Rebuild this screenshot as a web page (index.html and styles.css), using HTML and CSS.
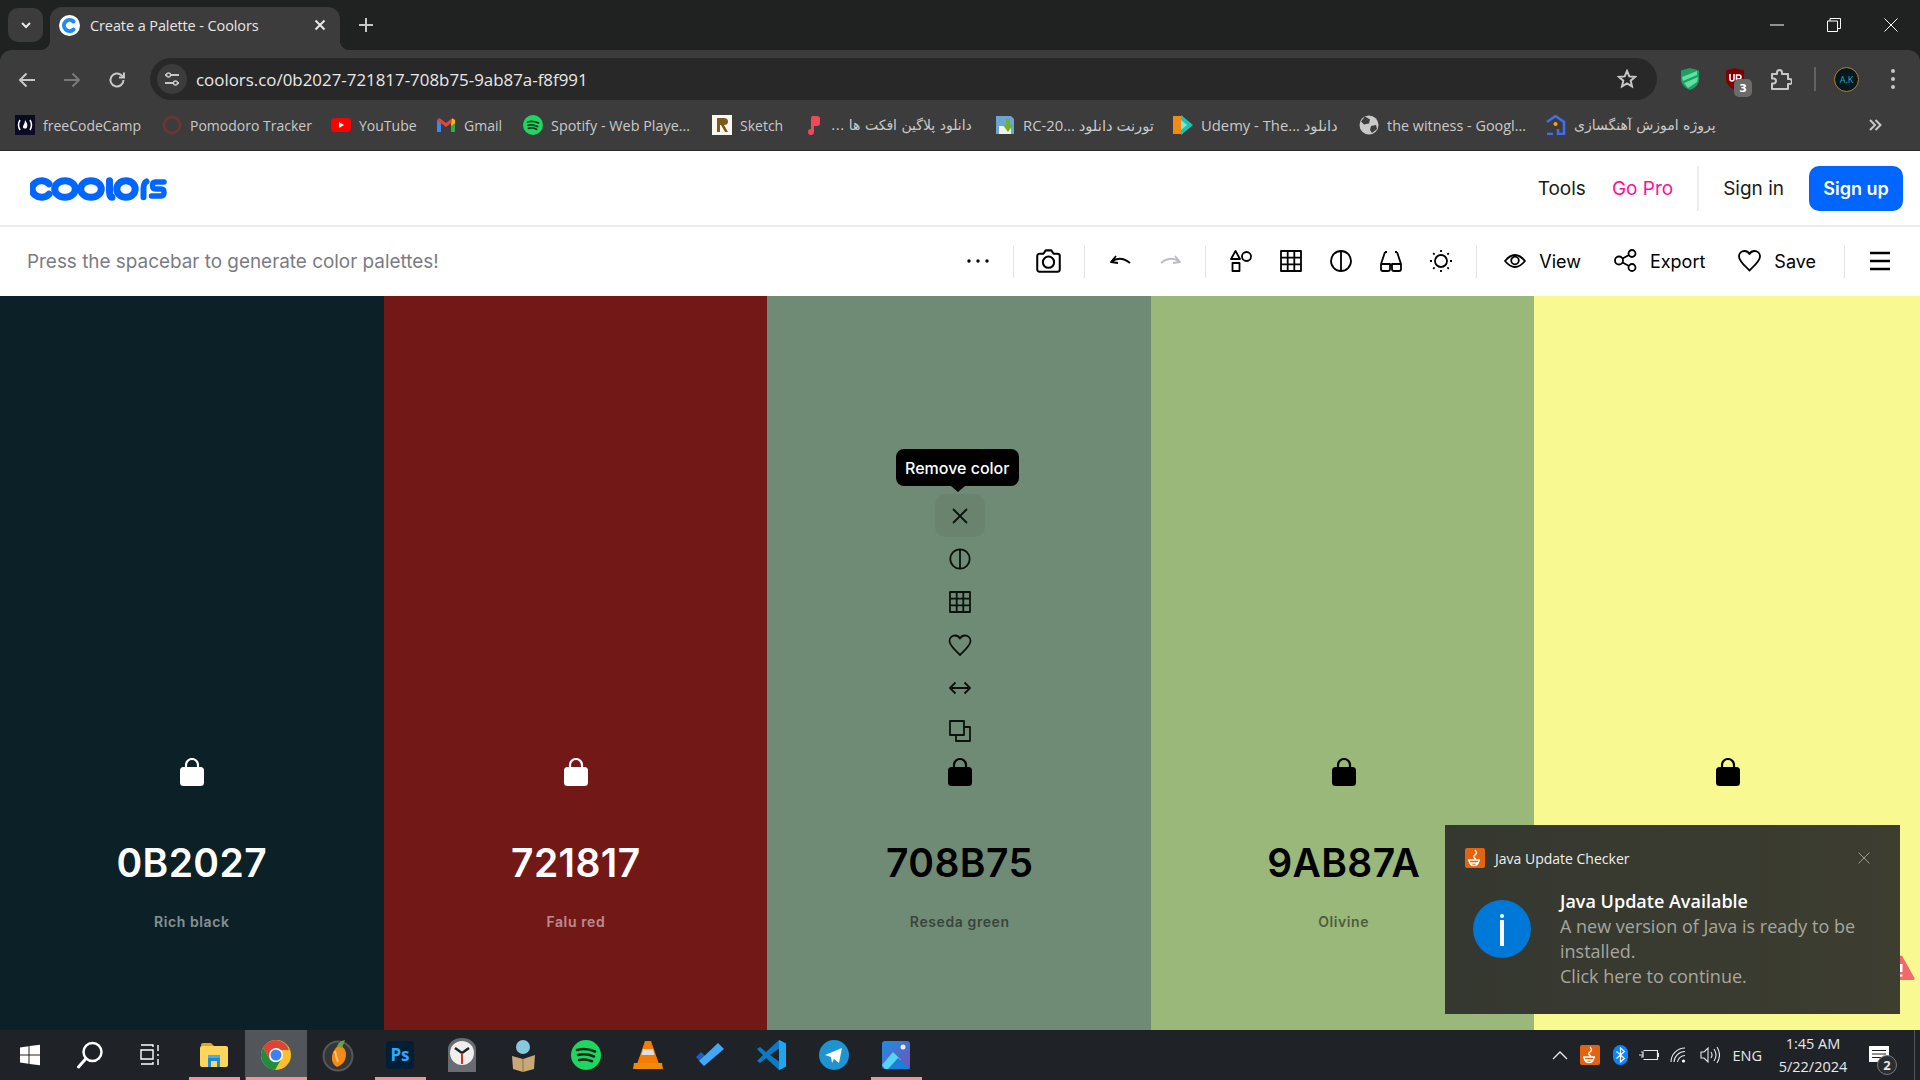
FILE: index.html
```html
<!DOCTYPE html>
<html lang="en">
<head>
<meta charset="utf-8">
<title>Create a Palette - Coolors</title>
<link rel="stylesheet" href="styles.css">
</head>
<body>
<header class="chrome">
  <div class="tabstrip">
    <button class="tabsearch"><svg width="14" height="14" viewBox="0 0 14 14"><path d="M3 5l4 4 4-4" class="st-w2"/></svg></button>
    <div class="tab">
      <svg class="favicon" width="21" height="21" viewBox="0 0 21 21"><circle cx="10.5" cy="10.5" r="10.5" fill="#fff"/><path d="M14.5 6.5a5.6 5.6 0 1 0 0 8" fill="none" stroke="#1a8df5" stroke-width="4" stroke-linecap="round"/></svg>
      <span class="tabtitle">Create a Palette - Coolors</span>
      <svg class="tabclose" width="12" height="12" viewBox="0 0 12 12"><path d="M1.5 1.5l9 9M10.5 1.5l-9 9" class="st-w2"/></svg>
    </div>
    <svg class="newtab" width="16" height="16" viewBox="0 0 16 16"><path d="M8 1v14M1 8h14" class="st-l2"/></svg>
    <div class="winctl">
      <svg width="14" height="14" viewBox="0 0 14 14"><path d="M0 7h14" class="st-w1"/></svg>
      <svg width="14" height="14" viewBox="0 0 14 14"><path d="M.5 3h10v10.500h-10zM3 3V.5h10.500v10H10.500" class="st-w1"/></svg>
      <svg width="14" height="14" viewBox="0 0 14 14"><path d="M.5.500l13 13M13.500.500l-13 13" class="st-w1"/></svg>
    </div>
  </div>
  <div class="navbar">
    <svg class="navicon" width="18" height="18" viewBox="0 0 18 18"><path d="M17 9H2M8.500 2.500L2 9l6.500 6.500" class="st-l2"/></svg>
    <svg class="navicon" width="18" height="18" viewBox="0 0 18 18"><path d="M1 9h15M9.500 2.500L16 9l-6.500 6.500" class="st-d2"/></svg>
    <svg class="navicon" width="18" height="18" viewBox="0 0 18 18"><path d="M15.500 9a6.500 6.500 0 1 1-2-4.700L16 6.500M16 1.500v5h-5" class="st-l2"/></svg>
    <div class="omnibox">
      <span class="tune"><svg width="16" height="16" viewBox="0 0 16 16"><path d="M1 4h1.500M7 4h8M1 12h8M13.500 12H15" class="st-l2"/><circle cx="4.500" cy="4" r="2" class="st-l15"/><circle cx="11.500" cy="12" r="2" class="st-l15"/></svg></span>
      <span class="url">coolors.co/0b2027-721817-708b75-9ab87a-f8f991</span>
      <svg class="star" width="20" height="20" viewBox="0 0 20 20"><path d="M10 2l2.300 5.400 5.700.5-4.300 3.800 1.300 5.700L10 14.400l-5 3 1.300-5.700L2 7.900l5.700-.5z" class="st-l2"/></svg>
    </div>
    <div class="exts">
      <svg class="ext-shield" width="20" height="24" viewBox="0 0 20 24"><path d="M10 1l9 2.500v9C19 18 14 21.500 10 23 6 21.500 1 18 1 12.500v-9z" fill="#1f9d66"/><path d="M2 10l15-6v4L3 14zM4 16l14-6-1 5-9 6z" fill="#5fe0a0"/></svg>
      <span class="ublock"><svg width="20" height="24" viewBox="0 0 20 24"><path d="M10 1l9 2.500v9C19 18 14 21.500 10 23 6 21.500 1 18 1 12.500v-9z" fill="#800000"/><path d="M5 7v5a2 2 0 0 0 4 0V7M11.500 13V8h2.500a2 2 0 0 1 0 4h-2" fill="none" stroke="#fff" stroke-width="1.600"/></svg><span class="ubadge">3</span></span>
      <svg class="ext-puzzle" width="22" height="22" viewBox="0 0 22 22"><path d="M2 6h5V4.500a2.500 2.500 0 0 1 5 0V6h6v5h1.500a2.500 2.500 0 0 1 0 5H18v5H2v-5.500h1.500a2.500 2.500 0 0 0 0-5H2z" fill="none" stroke="#c7c7c7" stroke-width="2" stroke-linejoin="round"/></svg>
      <i class="extdiv"></i>
      <span class="avatar">A.K</span>
      <svg class="ext-more" width="6" height="22" viewBox="0 0 6 22"><circle cx="3" cy="3" r="2" fill="#c7c7c7"/><circle cx="3" cy="11" r="2" fill="#c7c7c7"/><circle cx="3" cy="19" r="2" fill="#c7c7c7"/></svg>
    </div>
  </div>
  <nav class="bookmarks">
    <a class="bm b1"><svg width="20" height="20" viewBox="0 0 20 20"><rect width="20" height="20" fill="#0a0a23"/><path d="M5 5Q2 10 5 15M15 5q3 5 0 10" class="st-w15"/><path d="M10 5c2 3 3 5 2 7 0 2-4 2-4 0 0-2 2-3 2-7z" fill="#fff"/></svg><span>freeCodeCamp</span></a>
    <a class="bm b2"><svg width="20" height="20" viewBox="0 0 20 20"><circle cx="10" cy="10" r="8" fill="none" stroke="#673636" stroke-width="3"/></svg><span>Pomodoro Tracker</span></a>
    <a class="bm b3"><svg width="20" height="20" viewBox="0 0 20 20"><rect y="3" width="20" height="14" rx="4" fill="#f00"/><path d="M8 7l5 3-5 3z" fill="#fff"/></svg><span>YouTube</span></a>
    <a class="bm b4"><svg width="20" height="20" viewBox="0 0 20 20"><path d="M1 5v12h4V8z" fill="#4285f4"/><path d="M19 5v12h-4V8z" fill="#34a853"/><path d="M1 5l9 7 9-7-2.500-2L10 8 3.500 3z" fill="#ea4335"/><path d="M16 3.500L19 5v3l-4 3z" fill="#fbbc04"/></svg><span>Gmail</span></a>
    <a class="bm b5"><svg width="20" height="20" viewBox="0 0 20 20"><circle cx="10" cy="10" r="10" fill="#1ed760"/><path d="M4.500 7Q10 5.500 15.500 8M5 10.300q5-1.300 9.500 1.200M5.500 13.300q4-1 8 1" class="st-k2"/></svg><span>Spotify - Web Playe...</span></a>
    <a class="bm b6"><svg width="20" height="20" viewBox="0 0 20 20"><rect width="20" height="20" fill="#faf7ec"/><path d="M5 3h7q4 0 4 3.500T12 10l4 7h-3l-4-7H8v7H5z" fill="#7a5a22"/></svg><span>Sketch</span></a>
    <a class="bm b7"><svg width="14" height="20" viewBox="0 0 14 20"><path d="M5 1h5q3 0 3 3v4q0 3-3 3H7v6q0 3-3 3-3 0-3-3t3-3V3z" fill="#ef4958"/></svg><span>... دانلود پلاگین افکت ها</span></a>
    <a class="bm b8"><svg width="20" height="20" viewBox="0 0 20 20"><path d="M1 1h15l3 3v15H1z" fill="#6aa6cf"/><rect x="4" y="11" width="12" height="8" fill="#f2f2e6"/><path d="M11 4h4v6h3l-5 7-5-7h3z" fill="#6fb32a"/></svg><span>RC-20... تورنت دانلود</span></a>
    <a class="bm b9"><svg width="20" height="20" viewBox="0 0 20 20"><path d="M0 1h10v18H0z" fill="#f08a12"/><path d="M8 0l12 10L8 20z" fill="#16c5b4"/><path d="M8 5l6 5-6 5z" fill="#fff" opacity=".5"/></svg><span>Udemy - The... دانلود</span></a>
    <a class="bm b10"><svg width="20" height="20" viewBox="0 0 20 20"><circle cx="10" cy="10" r="9.500" fill="#c9c9c9"/><path d="M6 1.500l5 3-1 4-5 1-3-3zM12 11l5-1 1 4-5 4-2-3z" fill="#3c3c3c"/></svg><span>the witness - Googl...</span></a>
    <a class="bm b11"><svg width="21" height="20" viewBox="0 0 21 20"><path d="M2 7l8.500-6L19 7v12h-6v-5M8 19H2z" fill="none" stroke="#3f6ff0" stroke-width="2.500"/><circle cx="10.500" cy="9" r="2" fill="#f5a623"/></svg><span>پروژه اموزش آهنگسازی</span></a>
    <svg class="bm-more" width="14" height="14" viewBox="0 0 14 14"><path d="M2 2l5 5-5 5M7.500 2l5 5-5 5" class="st-l2"/></svg>
  </nav>
</header>

<main class="app">
  <div class="apphead">
    <svg class="logo" width="138" height="24" viewBox="0 0 138 24" role="img" aria-label="coolors">
      <g fill="none" stroke="#0066ff" stroke-width="7" stroke-linecap="round">
        <path d="M19 6.800A9.500 8.300 0 1 0 19 17.200"/>
        <ellipse cx="35" cy="12" rx="10.300" ry="8.300"/>
        <ellipse cx="61" cy="12" rx="10.300" ry="8.300"/>
        <path d="M79.500 3.700v10q0 6.500 2.500 6.500"/>
        <ellipse cx="96" cy="12" rx="9.200" ry="8.300"/>
        <path d="M113.500 20.300V12q0-6 3-7.500" stroke-width="6"/>
        <path d="M134 5h-8.500q-3 0-3 3.500t3 3.500h5.500q3 0 3 3.500t-3 3.500h-9.500" stroke-width="5.500"/>
      </g>
    </svg>
    <div class="mainnav">
      <a>Tools</a>
      <a class="gopro">Go Pro</a>
      <i class="navdiv"></i>
      <a>Sign in</a>
      <a class="signup">Sign up</a>
    </div>
  </div>
  <div class="apptools">
    <span class="hint">Press the spacebar to generate color palettes!</span>
    <div class="toolset">
      <button class="tb"><svg width="24" height="24" viewBox="0 0 24 24"><circle cx="3" cy="12" r="1.700" fill="#000"/><circle cx="12" cy="12" r="1.700" fill="#000"/><circle cx="21" cy="12" r="1.700" fill="#000"/></svg></button>
      <i class="tdiv"></i>
      <button class="tb"><svg width="27" height="27" viewBox="0 0 24 24"><path d="M4 6h3.500l2-3h5l2 3H20a2 2 0 0 1 2 2v12a2 2 0 0 1-2 2H4a2 2 0 0 1-2-2V8a2 2 0 0 1 2-2z" class="st-b"/><circle cx="12" cy="13.500" r="5" class="st-b"/></svg></button>
      <i class="tdiv"></i>
      <button class="tb"><svg width="24" height="24" viewBox="0 0 24 24"><path d="M3 13q9-7 19 1M8 7l-5 6 7 1" class="st-b"/></svg></button>
      <button class="tb"><svg width="24" height="24" viewBox="0 0 24 24"><path d="M22 13q-9-7-19 1M17 7l5 6-7 1" class="st-g"/></svg></button>
      <i class="tdiv"></i>
      <button class="tb"><svg width="24" height="24" viewBox="0 0 24 24"><path d="M6.500 2L11 10H2zM3.500 14h7v8h-7z" class="st-b"/><circle cx="17.500" cy="7.500" r="4.500" class="st-b"/></svg></button>
      <button class="tb"><svg width="24" height="24" viewBox="0 0 24 24"><path d="M2 2h20v20H2zM8.700 2v20M15.300 2v20M2 8.700h20M2 15.300h20" class="st-b"/></svg></button>
      <button class="tb"><svg width="24" height="24" viewBox="0 0 24 24"><circle cx="12" cy="12" r="10" class="st-b"/><path d="M12 2v20" class="st-b"/></svg></button>
      <button class="tb"><svg width="24" height="24" viewBox="0 0 24 24"><path d="M6 3L2 15v5a2 2 0 0 0 2 2h5a2 2 0 0 0 2-2v-5H2M18 3l4 12v5a2 2 0 0 1-2 2h-5a2 2 0 0 1-2-2v-5h9M6 3h2M16 3h2M11 16h2" class="st-b"/></svg></button>
      <button class="tb"><svg width="24" height="24" viewBox="0 0 24 24"><circle cx="12" cy="12" r="6" class="st-b"/><path d="M12 1v2M12 21v2M1 12h2M21 12h2M4.200 4.200l1.400 1.400M18.400 18.400l1.400 1.400M4.200 19.800l1.400-1.400M18.400 5.600l1.400-1.400" class="st-b"/></svg></button>
      <i class="tdiv tdiv-view"></i>
      <button class="tbtxt"><svg width="22" height="22" viewBox="0 0 22 22"><path d="M1 11q10-12 20 0-10 12-20 0z" class="st-b"/><circle cx="11" cy="10.500" r="3.800" class="st-b"/></svg>View</button>
      <button class="tbtxt"><svg width="23" height="23" viewBox="0 0 23 23"><circle cx="5" cy="11.500" r="4" class="st-b"/><circle cx="18" cy="4.500" r="3.500" class="st-b"/><circle cx="18" cy="18.500" r="3.500" class="st-b"/><path d="M8.500 9.500l6.500-3.500M8.500 13.500l6.500 3.500" class="st-b"/></svg>Export</button>
      <button class="tbtxt"><svg width="23" height="23" viewBox="0 0 23 23"><path d="M11.500 21.500C6 16 1 12 1 7.500 1 4 3.700 2 6.500 2c2 0 4 1 5 3 1-2 3-3 5-3C19.300 2 22 4 22 7.500 22 12 17 16 11.500 21.500z" class="st-b"/></svg>Save</button>
      <i class="tdiv tdiv-save"></i>
      <button class="tb"><svg width="22" height="22" viewBox="0 0 22 22"><path d="M1 3h20M1 11h20M1 19h20" class="st-b25"/></svg></button>
    </div>
  </div>
  <section class="palette">
    <article class="col c1">
      <svg class="lock" width="24" height="28" viewBox="0 0 24 28"><path d="M6 11V7a6 6 0 0 1 12 0v4" fill="none" stroke="#fff" stroke-width="2.200"/><rect y="9" width="24" height="19" rx="3.500" fill="#fff"/></svg>
      <h2 class="hex">0B2027</h2><p class="cname">Rich black</p>
    </article>
    <article class="col c2">
      <svg class="lock" width="24" height="28" viewBox="0 0 24 28"><path d="M6 11V7a6 6 0 0 1 12 0v4" fill="none" stroke="#fff" stroke-width="2.200"/><rect y="9" width="24" height="19" rx="3.500" fill="#fff"/></svg>
      <h2 class="hex">721817</h2><p class="cname">Falu red</p>
    </article>
    <article class="col c3 dark">
      <div class="actions">
        <span class="act act-on"><span class="tooltip">Remove color</span><svg width="20" height="20" viewBox="0 0 20 20"><path d="M3 3l14 14M17 3L3 17" class="st-bt"/></svg></span>
        <span class="act"><svg width="22" height="22" viewBox="0 0 22 22"><circle cx="11" cy="11" r="9.700" class="st-bt"/><path d="M11 1v20" class="st-bt"/></svg></span>
        <span class="act"><svg width="22" height="22" viewBox="0 0 22 22"><path d="M1 1h20v20H1zM7.700 1v20M14.300 1v20M1 7.700h20M1 14.300h20" class="st-bt"/></svg></span>
        <span class="act"><svg width="24" height="22" viewBox="0 0 24 22"><path d="M12 21C6.500 15.500 1.500 11.500 1.500 7 1.500 3.500 4.200 1.500 7 1.500c2 0 4 1 5 3 1-2 3-3 5-3 2.800 0 5.500 2 5.500 5.500C22.500 11.500 17.500 15.500 12 21z" class="st-bt"/></svg></span>
        <span class="act"><svg width="22" height="14" viewBox="0 0 22 14"><path d="M1 7h20M6.500 1.500L1 7l5.500 5.500M15.500 1.500L21 7l-5.500 5.500" class="st-bt"/></svg></span>
        <span class="act"><svg width="22" height="22" viewBox="0 0 22 22"><path d="M1 1h14v14H1zM15 7h6v14H7v-6" class="st-bt"/></svg></span>
      </div>
      <svg class="lock lockstack" width="24" height="28" viewBox="0 0 24 28"><path d="M6 11V7a6 6 0 0 1 12 0v4" fill="none" stroke="#000" stroke-width="2.200"/><rect y="9" width="24" height="19" rx="3.500" fill="#000"/></svg>
      <h2 class="hex">708B75</h2><p class="cname">Reseda green</p>
    </article>
    <article class="col c4 dark">
      <svg class="lock" width="24" height="28" viewBox="0 0 24 28"><path d="M6 11V7a6 6 0 0 1 12 0v4" fill="none" stroke="#000" stroke-width="2.200"/><rect y="9" width="24" height="19" rx="3.500" fill="#000"/></svg>
      <h2 class="hex">9AB87A</h2><p class="cname">Olivine</p>
    </article>
    <article class="col c5 dark">
      <svg class="lock" width="24" height="28" viewBox="0 0 24 28"><path d="M6 11V7a6 6 0 0 1 12 0v4" fill="none" stroke="#000" stroke-width="2.200"/><rect y="9" width="24" height="19" rx="3.500" fill="#000"/></svg>
    </article>
  </section>
</main>

<svg class="warn" width="28" height="26" viewBox="0 0 28 26"><path d="M14 2L26 23.500H2z" fill="#f2696c" stroke="#f2696c" stroke-width="3" stroke-linejoin="round"/><path d="M14 9v8M14 19.500v2" stroke="#fff" stroke-width="3"/></svg>

<aside class="toast">
  <div class="toast-head">
    <svg width="20" height="20" viewBox="0 0 20 20"><rect width="20" height="20" rx="2" fill="#e2640f"/><path d="M10 2q3 3 0 5t1 4M3 12h12M5 15h8M4 12.500q1 5 5 5t5-5" fill="none" stroke="#fff" stroke-width="1.400"/></svg>
    <span class="toast-app">Java Update Checker</span>
    <svg class="toast-x" width="12" height="12" viewBox="0 0 12 12"><path d="M.5.500l11 11M11.500.500l-11 11" fill="none" stroke="#9b9b94" stroke-width="1"/></svg>
  </div>
  <div class="toast-body">
    <span class="info"><i class="info-dot"></i><i class="info-bar"></i></span>
    <div class="toast-text">
      <strong>Java Update Available</strong>
      <p>A new version of Java is ready to be installed.<br>Click here to continue.</p>
    </div>
  </div>
</aside>

<footer class="taskbar">
  <div class="sys">
    <span class="sysbtn"><svg width="22" height="22" viewBox="0 0 22 22"><path d="M1 3.500l8.500-1.200v8.200H1zM10.500 2.100L21 .7v9.800H10.500zM1 11.500h8.500v8.200L1 18.500zM10.500 11.500H21v9.800l-10.500-1.400z" fill="#fff"/></svg></span>
    <span class="sysbtn"><svg width="28" height="28" viewBox="0 0 28 28"><circle cx="16.500" cy="11" r="9" fill="none" stroke="#fff" stroke-width="2.500"/><path d="M10 17.500L2.500 26" stroke="#fff" stroke-width="3" stroke-linecap="round"/></svg></span>
    <span class="sysbtn"><svg width="22" height="22" viewBox="0 0 22 22"><path d="M2 6h12v9H2zM2 1h12v2M2 20h12v-2M19 1v6M19 10v2M19 15v6" fill="none" stroke="#fff" stroke-width="1.400"/></svg></span>
  </div>
  <div class="apps">
    <span class="app-ic run"><svg width="30" height="26" viewBox="0 0 30 26"><path d="M2 3q0-2 2-2h8l3 3h-13z" fill="#e8a60c"/><rect x="1" y="4" width="28" height="21" rx="2" fill="#ffd55c"/><path d="M9 25V14h12v11h-3v-6h-6v6z" fill="#1d8ad6"/><rect x="9" y="13" width="12" height="3" fill="#3fb0f0"/></svg></span>
    <span class="app-ic active"><svg width="32" height="32" viewBox="0 0 32 32"><circle cx="16" cy="16" r="15" fill="#fbc02d"/><path d="M16 1A15 15 0 0 0 3 8.500L9.500 20l3-5a4 4 0 0 1 3.500-4h13A15 15 0 0 0 16 1z" fill="#db4437"/><path d="M3 8.500A15 15 0 0 0 15 31l6.500-11.300A7 7 0 0 1 9.500 20z" fill="#1e8e3e"/><circle cx="16" cy="16" r="7" fill="#fff"/><circle cx="16" cy="16" r="5.500" fill="#3b82f6"/></svg></span>
    <span class="app-ic"><svg width="32" height="34" viewBox="0 0 32 34"><circle cx="16" cy="18" r="14.500" fill="#333634" stroke="#55585a" stroke-width="2"/><path d="M17 7q8 3 7 11-1 8-9 11-4-2-5-7-1-9 7-15z" fill="#f38a1c"/><path d="M13 13q1 6 3 11" stroke="#ffc46b" stroke-width="2" fill="none"/><path d="M15 8q2-5 8-6l-3 8z" fill="#6ea23a"/></svg></span>
    <span class="app-ic run"><svg width="28" height="28" viewBox="0 0 28 28"><rect width="28" height="28" rx="4" fill="#001e36"/><text x="14" y="20" class="ps">Ps</text></svg></span>
    <span class="app-ic"><svg width="30" height="34" viewBox="0 0 30 34"><path d="M1 34V11a14 11 0 0 1 28 0v23z" fill="#696d72"/><circle cx="15" cy="15" r="12" fill="#eee"/><path d="M15 15L8 10M15 15l7-5" stroke="#222" stroke-width="2.500"/><path d="M15 15v11" stroke="#c8361d" stroke-width="2"/></svg></span>
    <span class="app-ic"><svg width="30" height="34" viewBox="0 0 30 34"><circle cx="14" cy="9" r="7" fill="#87c8dc"/><path d="M3 18l11 3 12-4-1 14-11 3-10-3z" fill="#c8a877"/><path d="M14 21v13" stroke="#8d7048"/></svg></span>
    <span class="app-ic"><svg width="30" height="30" viewBox="0 0 30 30"><circle cx="15" cy="15" r="15" fill="#1ed760"/><path d="M6 10q9-2.500 18 1.500M7 15q8-2 16 1.500M8 20q7-1.500 13 1.200" class="st-k3"/></svg></span>
    <span class="app-ic"><svg width="30" height="30" viewBox="0 0 30 30"><path d="M12 1h6l8 23H4z" fill="#f57c00"/><path d="M10 9h10l1.500 6h-13z" fill="#e0e0e0"/><path d="M1 23h28l1 6H0z" fill="#ef8a0c"/></svg></span>
    <span class="app-ic"><svg width="30" height="30" viewBox="0 0 30 30"><path d="M1 17l5-5 8 8-5 6z" fill="#1a5fc4"/><path d="M9 26l-5-5L23 3l6 6z" fill="#43a7f5"/></svg></span>
    <span class="app-ic"><svg width="30" height="32" viewBox="0 0 30 32"><path d="M22 1l7 3.500v23L22 31 9 19l-6 5-3-2 6-6-6-6 3-2 6 5z" fill="#0a7cc7"/><path d="M22 1l7 3.500v23L22 31z" fill="#1ea7f0"/><path d="M22 9.500L13 16l9 6.500z" fill="#1f2226"/></svg></span>
    <span class="app-ic"><svg width="30" height="30" viewBox="0 0 30 30"><circle cx="15" cy="15" r="15" fill="#1e94d0"/><path d="M6 15L23 8l-3 15-5-4-2 4-1-6z" fill="#fff"/></svg></span>
    <span class="app-ic run"><svg width="28" height="28" viewBox="0 0 28 28"><defs><linearGradient id="ph" x1="0" y1="0" x2="1" y2="1"><stop offset="0" stop-color="#1a8fe3"/><stop offset="1" stop-color="#7b4fb5"/></linearGradient></defs><rect width="28" height="28" rx="3" fill="url(#ph)"/><circle cx="21" cy="6" r="2.500" fill="#e6eefc"/><path d="M0 24l11-13 8 8-6 9H3z" fill="#56d4f5"/><path d="M6 28l10-11 12 10v1z" fill="#1b7fd8"/></svg></span>
  </div>
  <div class="tray">
    <svg class="tr-chev" width="16" height="10" viewBox="0 0 16 10"><path d="M1 9l7-7 7 7" fill="none" stroke="#e8e8e8" stroke-width="1.400"/></svg>
    <svg class="tr-java" width="20" height="20" viewBox="0 0 20 20"><rect width="20" height="20" rx="2" fill="#e2640f"/><path d="M10 2q3 3 0 5t1 4M3 12h12M5 15h8M4 12.500q1 5 5 5t5-5" fill="none" stroke="#fff" stroke-width="1.400"/></svg>
    <svg class="tr-bt" width="15" height="20" viewBox="0 0 15 20"><rect width="15" height="20" rx="7.500" fill="#0a84ff"/><path d="M3.500 6.500l8 7-4 3.500v-14l4 3.500-8 7" fill="none" stroke="#fff" stroke-width="1.200"/></svg>
    <svg class="tr-batt" width="20" height="12" viewBox="0 0 20 12"><path d="M4.500 1.500h14v9h-14M0 6h4M2 3h2v5H2" fill="none" stroke="#e8e8e8" stroke-width="1.200"/><path d="M19.500 4v4" stroke="#e8e8e8"/></svg>
    <svg class="tr-wifi" width="16" height="16" viewBox="0 0 16 16"><path d="M1 15A14 14 0 0 1 15 1M4 15A11 11 0 0 1 15 4.500M7.500 15A7.500 7.500 0 0 1 15 8.500" fill="none" stroke="#e8e8e8" stroke-width="1.100"/><circle cx="13.500" cy="14" r="1.600" fill="#fff"/></svg>
    <svg class="tr-vol" width="20" height="18" viewBox="0 0 20 18"><path d="M1 6h3l4-4v14l-4-4H1zM11 6q2 3 0 6M14 3q4 6 0 12M17 1q5 8 0 16" fill="none" stroke="#e8e8e8" stroke-width="1.100"/></svg>
    <span class="tr-lang">ENG</span>
    <div class="tr-clock"><span>1:45 AM</span><span>5/22/2024</span></div>
    <span class="tr-note"><svg width="20" height="19" viewBox="0 0 20 19"><path d="M0 0h20v16h-7l-3 3v-3H0z" fill="#fff"/><path d="M3 4.500h14M3 8h14M3 11.500h9" stroke="#222" stroke-width="1"/></svg><b class="tr-badge">2</b></span>
    <i class="tr-edge"></i>
  </div>
</footer>
</body>
</html>
```

FILE: styles.css
```css
* { box-sizing: border-box; }
html, body { margin: 0; padding: 0; }
body { width: 1920px; height: 1080px; overflow: hidden; display: flex; flex-direction: column; font-family: Inter, "Liberation Sans", sans-serif; background: #fff; position: relative; }
button { border: 0; background: none; padding: 0; font: inherit; color: inherit; }
svg { display: block; flex: none; }

.st-w2 { fill: none; stroke: #e8e8e8; stroke-width: 2; }
.st-w1 { fill: none; stroke: #fff; stroke-width: 1; }
.st-w15 { fill: none; stroke: #fff; stroke-width: 1.500; }
.st-l2 { fill: none; stroke: #c7c7c7; stroke-width: 2; }
.st-l15 { fill: none; stroke: #c7c7c7; stroke-width: 1.500; }
.st-d2 { fill: none; stroke: #7a7a7a; stroke-width: 2; }
.st-k2 { fill: none; stroke: #16351f; stroke-width: 1.800; stroke-linecap: round; }
.st-k3 { fill: none; stroke: #12261a; stroke-width: 2.600; stroke-linecap: round; }
.st-b { fill: none; stroke: #000; stroke-width: 1.800; stroke-linejoin: round; }
.st-b25 { fill: none; stroke: #000; stroke-width: 2.500; }
.st-bt { fill: none; stroke: #0a120c; stroke-width: 1.800; stroke-linejoin: round; }
.st-g { fill: none; stroke: #bcbcc2; stroke-width: 1.800; stroke-linejoin: round; }

/* browser chrome */
.chrome { flex: none; background: #202222; font-family: "Open Sans", "DejaVu Sans", sans-serif; color: #e3e3e3; }
.tabstrip { height: 50px; display: flex; align-items: flex-start; padding: 8px 0 0 8px; }
.tabsearch { width: 35px; height: 34px; border-radius: 10px; background: #3c3c3c; display: flex; align-items: center; justify-content: center; margin-right: 7px; }
.tab { width: 290px; height: 43px; margin-top: -1px; background: #3c3c3c; border-radius: 12px 12px 0 0; display: flex; align-items: center; padding: 0 14.500px 7px 9px; position: relative; }
.tab::before, .tab::after { content: ""; position: absolute; bottom: 0; width: 10px; height: 10px; }
.tab::before { left: -10px; background: radial-gradient(circle at 0 0, transparent 10px, #3c3c3c 10.500px); }
.tab::after { right: -10px; background: radial-gradient(circle at 100% 0, transparent 10px, #3c3c3c 10.500px); }
.favicon { margin-right: 10px; }
.tabtitle { font-size: 14.500px; letter-spacing: -.1px; flex: 1; color: #e6e6e6; }
.newtab { margin: 9px 0 0 18px; }
.winctl { margin-left: auto; display: flex; gap: 43px; padding: 10px 22px 0 0; }
.navbar { height: 50px; background: #3c3c3c; border-radius: 12px 12px 0 0; display: flex; align-items: flex-start; padding: 8px 0 0 18px; }
.navicon { margin: 13px 27px 0 0; }
.navicon:nth-child(3) { margin-right: 24px; }
.omnibox { width: 1507px; height: 42px; background: #282828; border-radius: 21px; display: flex; align-items: center; padding: 0 20px 0 7px; }
.tune { width: 30px; height: 30px; border-radius: 50%; background: #3c3c3c; display: flex; align-items: center; justify-content: center; margin-right: 9px; }
.url { font-size: 16.900px; color: #e8e8e8; flex: 1; }
.exts { display: flex; align-items: center; height: 42px; flex: 1; position: relative; }
.ext-shield { margin-left: 23px; }
.ublock { margin-left: 25px; position: relative; display: block; }
.ubadge { position: absolute; left: 9px; top: 12px; width: 18px; height: 18px; border-radius: 5px; background: #6b6b6b; font: bold 11px "DejaVu Sans", sans-serif; color: #fff; display: flex; align-items: center; justify-content: center; }
.ext-puzzle { margin-left: 25px; }
.extdiv { width: 2px; height: 24px; background: #626262; margin-left: 22px; }
.avatar { width: 25px; height: 25px; margin-left: 18px; border-radius: 50%; background: #06181c; border: 1px solid #b5812e; color: #2ea9ba; font: 9px "Open Sans", sans-serif; display: flex; align-items: center; justify-content: center; }
.ext-more { margin-left: 31px; }
.bookmarks { height: 51px; background: #3c3c3c; border-bottom: 1px solid #2a2a2a; display: flex; align-items: center; padding-left: 15px; font-size: 14px; color: #c9c9c9; position: relative; }
.bm { display: flex; align-items: center; gap: 8px; white-space: nowrap; }
.b1 { width: 147px; }
.b2 { width: 169px; }
.b3 { width: 105px; }
.b4 { width: 87px; }
.b5 { width: 189px; }
.b5 span, .b10 span { font-size: 14.400px; }
.b6 { width: 95px; }
.b7 { width: 188px; gap: 10px; }
.b8 { width: 178px; }
.b9 { width: 186px; }
.b10 { width: 186px; }
.bm-more { position: absolute; left: 1868px; top: 18px; }
.b7 span, .b11 span { font-family: "DejaVu Sans", sans-serif; font-size: 14px; }
.b8 span, .b9 span { font-size: 14.800px; }

/* app */
.app { flex: 1; display: flex; flex-direction: column; min-height: 0; }
.apphead { height: 76px; flex: none; display: flex; align-items: center; justify-content: space-between; padding: 0 17px 0 30px; border-bottom: 2px solid #ececec; }
.logo { margin-top: 1px; }
.mainnav { display: flex; align-items: center; gap: 26px; font-size: 19px; color: #1a1a1a; }
.gopro { color: #ff0f96; }
.navdiv { width: 2px; height: 45px; background: #ececec; margin: 0 -2px; }
.signup { margin-left: -1px; width: 94px; height: 45px; background: #0066ff; color: #fff; font-weight: 600; font-size: 18px; border-radius: 10px; display: flex; align-items: center; justify-content: center; }
.apptools { height: 69px; flex: none; display: flex; align-items: center; justify-content: space-between; padding-left: 27px; }
.hint { font-size: 18.900px; color: #7b7b84; }
.toolset { display: flex; align-items: center; padding-right: 15px; font-size: 18px; color: #000; }
.tb { width: 50px; height: 50px; display: flex; align-items: center; justify-content: center; padding-bottom: 2px; }
.tdiv { width: 1px; height: 32px; background: #e5e5e5; margin: 0 10px; }
.tdiv-view { margin-right: 11px; }
.tbtxt { display: flex; align-items: center; gap: 13px; padding: 0 16.500px; height: 50px; }
.tbtxt svg { margin-top: -2px; }
.tdiv-save { margin-left: 11.500px; }

/* palette */
.palette { flex: 1; display: grid; grid-template-columns: repeat(4, 383.500px) 1fr; min-height: 0; }
.col { display: flex; flex-direction: column; align-items: center; justify-content: flex-end; color: #fff; padding-bottom: 98px; position: relative; }
.c1 { background: #0b2027; }
.c2 { background: #721817; padding-left: 1.200px; }
.c3 { background: #708b75; padding-left: 2px; }
.c4 { background: #9ab87a; padding-left: 2.800px; }
.c5 { background: #f8f991; padding-left: 2px; }
.dark { color: #000; }
.lock { margin-bottom: 52px; }
.c5 .lock { margin-bottom: 146px; }
.hex { margin: 0 0 24px; height: 50px; line-height: 50px; font-size: 39px; font-weight: 600; letter-spacing: .4px; }
.cname { margin: 0; height: 20px; line-height: 20px; font-size: 14px; font-weight: 600; letter-spacing: .6px; opacity: .5; }
.actions { display: flex; flex-direction: column; align-items: center; margin-bottom: 6px; }
.act { width: 50px; height: 43px; display: flex; align-items: center; justify-content: center; position: relative; }
.act-on { background: rgba(0, 0, 0, .05); border-radius: 10px; }
.tooltip { position: absolute; left: -39px; top: -45px; width: 123px; height: 37px; background: #000; color: #fff; border-radius: 8px; font-size: 16px; font-weight: 500; display: flex; align-items: center; justify-content: center; white-space: nowrap; }
.tooltip::after { content: ""; position: absolute; left: 55px; bottom: -6px; border: 7px solid transparent; border-bottom: 0; border-top: 6px solid #000; }

/* toast */
.warn { position: fixed; left: 1887px; top: 955px; }
.toast { position: fixed; left: 1445px; top: 825px; width: 455px; height: 189px; background: linear-gradient(90deg, #353830, #3d3d30); color: #fff; font-family: "Open Sans", sans-serif; padding: 23px 30px 0 20px; }
.toast-head { display: flex; align-items: center; height: 20px; font-size: 14px; color: #f0f0ec; }
.toast-app { margin-left: 10px; flex: 1; }
.toast-body { display: flex; margin-top: 20.500px; }
.info { width: 58px; height: 58px; border-radius: 50%; background: #0078d7; margin: 11.500px 0 0 8px; display: flex; flex-direction: column; align-items: center; flex: none; padding-top: 14px; gap: 2px; }
.info-dot { width: 4px; height: 4px; background: #fff; border-radius: 50%; }
.info-bar { width: 4px; height: 26px; background: #fff; }
.toast-text { margin: 0 0 0 29px; font-size: 18px; line-height: 25px; }
.toast-text strong { display: block; font-weight: 600; color: #fff; font-size: 18px; }
.toast-text p { margin: 0; color: #a6a69e; }

/* taskbar */
.taskbar { height: 50px; flex: none; background: #1f2226; display: flex; align-items: stretch; font-family: "Open Sans", sans-serif; color: #e8e8e8; position: relative; }
.sys { display: flex; width: 183px; }
.sysbtn { width: 60px; display: flex; align-items: center; justify-content: center; }
.apps { display: flex; }
.app-ic { width: 62px; display: flex; align-items: center; justify-content: center; position: relative; }
.app-ic.run::after { content: ""; position: absolute; left: 6px; right: 5px; bottom: 0; height: 3px; background: #ff8f8f; }
.app-ic.active { background: #52555a; }
.app-ic.active::after { content: ""; position: absolute; left: 1px; right: 0; bottom: 0; height: 3px; background: #ff8f8f; }
.ps { font: bold 17px "Open Sans", sans-serif; fill: #31a8ff; text-anchor: middle; }
.tray { margin-left: auto; display: flex; align-items: center; padding-right: 31px; position: relative; }
.tr-java { margin-left: 12px; }
.tr-bt { margin-left: 13px; }
.tr-batt { margin-left: 11px; }
.tr-wifi { margin-left: 10.500px; }
.tr-vol { margin-left: 14.500px; }
.tr-lang { margin-left: 12px; font-size: 14.500px; }
.tr-clock { margin-left: 16px; display: flex; flex-direction: column; align-items: center; font-size: 14.500px; line-height: 23px; width: 70px; }
.tr-note { margin-left: 21px; position: relative; display: block; }
.tr-badge { position: absolute; left: 8px; top: 9px; width: 20px; height: 20px; border-radius: 50%; border: 1px solid #7a7a7a; background: #2b2e31; font-size: 13px; display: flex; align-items: center; justify-content: center; }
.tr-edge { position: absolute; right: 5px; top: 0; width: 1px; height: 50px; background: #555; }
```
